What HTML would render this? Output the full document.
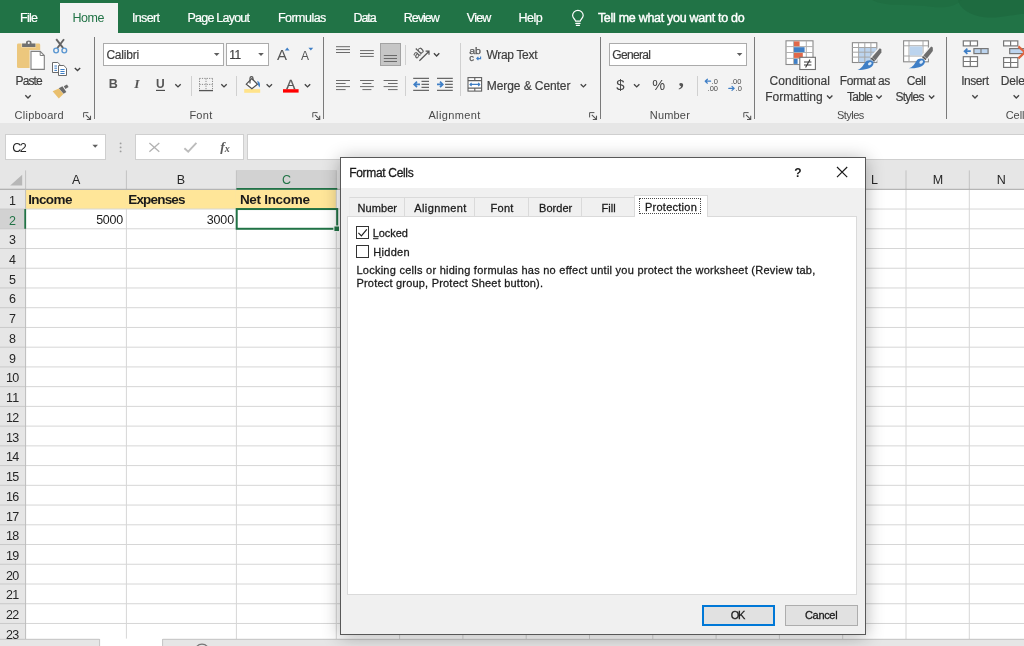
<!DOCTYPE html>
<html><head><meta charset="utf-8"><title>Excel - Format Cells</title>
<style>
html,body{margin:0;padding:0;}
body{width:1024px;height:646px;overflow:hidden;position:relative;background:#fff;font-family:"Liberation Sans",sans-serif;}
.a{position:absolute;}
.t{position:absolute;white-space:pre;line-height:20px;font-family:"Liberation Sans",sans-serif;}
#tabbar{left:0;top:0;width:1024px;height:33px;background:#217346;}
#hometab{left:60px;top:3px;width:57.5px;height:31px;background:#f3f3f3;}
#ribbon{left:0;top:33px;width:1024px;height:90.4px;background:#f3f3f3;}
#fbar{left:0;top:123.4px;width:1024px;height:46.4px;background:#e6e6e6;}
.box{background:#fff;border:1px solid #cfcfcf;box-sizing:border-box;}
.vsep{width:1px;background:#7a7a7a;top:37px;height:82px;}
.ssep{width:1px;background:#d0d0d0;}
.inp{background:#fff;border:1px solid #ababab;box-sizing:border-box;top:43.3px;height:22.6px;}
svg{position:absolute;overflow:visible;}
#dlg{left:340px;top:157px;width:526px;height:478px;background:#f0f0f0;box-sizing:border-box;border:1px solid #585858;box-shadow:0 2px 17px 0 rgba(0,0,0,.30);}
#dtitle{left:341px;top:158px;width:524px;height:30px;background:#fff;}
#pane{left:347px;top:215.7px;width:510px;height:379.6px;background:#fff;border:1px solid #dadada;box-sizing:border-box;}
.dtab{top:197.1px;height:19px;border:1px solid #dadada;border-bottom:none;box-sizing:border-box;background:#f0f0f0;}
#atab{left:634.3px;top:195.2px;width:73.4px;height:21.5px;background:#fff;border:1px solid #dadada;border-bottom:none;box-sizing:border-box;}
#focus{left:638.8px;top:198.4px;width:62px;height:16px;border:1px dotted #4a4a4a;box-sizing:border-box;}
.cb{width:13px;height:13px;border:1px solid #333;background:#fff;box-sizing:border-box;}
.btn{top:604.6px;height:21.6px;background:#e1e1e1;box-sizing:border-box;}
#txt{position:absolute;left:0;top:0;width:1024px;height:646px;will-change:transform;}
svg{will-change:transform;}
.dt{-webkit-text-stroke:.28px #1a1a1a;}
.rt{-webkit-text-stroke:.18px #3d3d3d;}
.wt{-webkit-text-stroke:.2px #fff;}
.wb{-webkit-text-stroke:.4px #fff;}

</style></head>
<body>
<svg class="a" style="left:0;top:0" width="1024" height="646" viewBox="0 0 1024 646">
<rect x="0" y="169.8" width="1024" height="476.2" fill="#fff"/>
<rect x="25.6" y="189.60000000000002" width="310.7" height="19.435" fill="#ffe699"/>
<path d="M25.6 189.30 H1024" stroke="#d6d6d6" stroke-width="1"/>
<path d="M25.6 209.04 H1024" stroke="#d6d6d6" stroke-width="1"/>
<path d="M25.6 228.77 H1024" stroke="#d6d6d6" stroke-width="1"/>
<path d="M25.6 248.50 H1024" stroke="#d6d6d6" stroke-width="1"/>
<path d="M25.6 268.24 H1024" stroke="#d6d6d6" stroke-width="1"/>
<path d="M25.6 287.98 H1024" stroke="#d6d6d6" stroke-width="1"/>
<path d="M25.6 307.71 H1024" stroke="#d6d6d6" stroke-width="1"/>
<path d="M25.6 327.44 H1024" stroke="#d6d6d6" stroke-width="1"/>
<path d="M25.6 347.18 H1024" stroke="#d6d6d6" stroke-width="1"/>
<path d="M25.6 366.92 H1024" stroke="#d6d6d6" stroke-width="1"/>
<path d="M25.6 386.65 H1024" stroke="#d6d6d6" stroke-width="1"/>
<path d="M25.6 406.38 H1024" stroke="#d6d6d6" stroke-width="1"/>
<path d="M25.6 426.12 H1024" stroke="#d6d6d6" stroke-width="1"/>
<path d="M25.6 445.86 H1024" stroke="#d6d6d6" stroke-width="1"/>
<path d="M25.6 465.59 H1024" stroke="#d6d6d6" stroke-width="1"/>
<path d="M25.6 485.32 H1024" stroke="#d6d6d6" stroke-width="1"/>
<path d="M25.6 505.06 H1024" stroke="#d6d6d6" stroke-width="1"/>
<path d="M25.6 524.80 H1024" stroke="#d6d6d6" stroke-width="1"/>
<path d="M25.6 544.53 H1024" stroke="#d6d6d6" stroke-width="1"/>
<path d="M25.6 564.26 H1024" stroke="#d6d6d6" stroke-width="1"/>
<path d="M25.6 584.00 H1024" stroke="#d6d6d6" stroke-width="1"/>
<path d="M25.6 603.74 H1024" stroke="#d6d6d6" stroke-width="1"/>
<path d="M25.6 623.47 H1024" stroke="#d6d6d6" stroke-width="1"/>
<path d="M25.6 643.20 H1024" stroke="#d6d6d6" stroke-width="1"/>
<path d="M126.4 189.3 V640" stroke="#d6d6d6" stroke-width="1"/>
<path d="M236.4 189.3 V640" stroke="#d6d6d6" stroke-width="1"/>
<path d="M336.3 189.3 V640" stroke="#d6d6d6" stroke-width="1"/>
<path d="M399.6 189.3 V640" stroke="#d6d6d6" stroke-width="1"/>
<path d="M462.9 189.3 V640" stroke="#d6d6d6" stroke-width="1"/>
<path d="M526.2 189.3 V640" stroke="#d6d6d6" stroke-width="1"/>
<path d="M589.5 189.3 V640" stroke="#d6d6d6" stroke-width="1"/>
<path d="M652.8 189.3 V640" stroke="#d6d6d6" stroke-width="1"/>
<path d="M716.1 189.3 V640" stroke="#d6d6d6" stroke-width="1"/>
<path d="M779.4 189.3 V640" stroke="#d6d6d6" stroke-width="1"/>
<path d="M842.7 189.3 V640" stroke="#d6d6d6" stroke-width="1"/>
<path d="M906.0 189.3 V640" stroke="#d6d6d6" stroke-width="1"/>
<path d="M969.3 189.3 V640" stroke="#d6d6d6" stroke-width="1"/>
<path d="M1032.6 189.3 V640" stroke="#d6d6d6" stroke-width="1"/>
<path d="M1095.9 189.3 V640" stroke="#d6d6d6" stroke-width="1"/>
<path d="M1159.2 189.3 V640" stroke="#d6d6d6" stroke-width="1"/>
<path d="M126.4 190.10000000000002 V208.43500000000003" stroke="#ffe699" stroke-width="1.8"/>
<path d="M236.4 190.10000000000002 V208.43500000000003" stroke="#ffe699" stroke-width="1.8"/>
<rect x="0" y="169.8" width="1024" height="19.5" fill="#e6e6e6"/>
<rect x="0" y="189.3" width="25.6" height="456.7" fill="#e6e6e6"/>
<rect x="236.4" y="169.8" width="99.9" height="18.5" fill="#d2d2d2"/>
<rect x="0" y="209.04" width="24.6" height="19.735" fill="#d2d2d2"/>
<path d="M25.6 170.4 V189.3" stroke="#c2c2c2" stroke-width="1"/>
<path d="M126.4 170.4 V189.3" stroke="#c2c2c2" stroke-width="1"/>
<path d="M236.4 170.4 V189.3" stroke="#c2c2c2" stroke-width="1"/>
<path d="M336.3 170.4 V189.3" stroke="#c2c2c2" stroke-width="1"/>
<path d="M399.6 170.4 V189.3" stroke="#c2c2c2" stroke-width="1"/>
<path d="M462.9 170.4 V189.3" stroke="#c2c2c2" stroke-width="1"/>
<path d="M526.2 170.4 V189.3" stroke="#c2c2c2" stroke-width="1"/>
<path d="M589.5 170.4 V189.3" stroke="#c2c2c2" stroke-width="1"/>
<path d="M652.8 170.4 V189.3" stroke="#c2c2c2" stroke-width="1"/>
<path d="M716.1 170.4 V189.3" stroke="#c2c2c2" stroke-width="1"/>
<path d="M779.4 170.4 V189.3" stroke="#c2c2c2" stroke-width="1"/>
<path d="M842.7 170.4 V189.3" stroke="#c2c2c2" stroke-width="1"/>
<path d="M906.0 170.4 V189.3" stroke="#c2c2c2" stroke-width="1"/>
<path d="M969.3 170.4 V189.3" stroke="#c2c2c2" stroke-width="1"/>
<path d="M1032.6 170.4 V189.3" stroke="#c2c2c2" stroke-width="1"/>
<path d="M1095.9 170.4 V189.3" stroke="#c2c2c2" stroke-width="1"/>
<path d="M1159.2 170.4 V189.3" stroke="#c2c2c2" stroke-width="1"/>
<path d="M0 189.30 H25.6" stroke="#c9c9c9" stroke-width="1"/>
<path d="M0 209.04 H25.6" stroke="#c9c9c9" stroke-width="1"/>
<path d="M0 228.77 H25.6" stroke="#c9c9c9" stroke-width="1"/>
<path d="M0 248.50 H25.6" stroke="#c9c9c9" stroke-width="1"/>
<path d="M0 268.24 H25.6" stroke="#c9c9c9" stroke-width="1"/>
<path d="M0 287.98 H25.6" stroke="#c9c9c9" stroke-width="1"/>
<path d="M0 307.71 H25.6" stroke="#c9c9c9" stroke-width="1"/>
<path d="M0 327.44 H25.6" stroke="#c9c9c9" stroke-width="1"/>
<path d="M0 347.18 H25.6" stroke="#c9c9c9" stroke-width="1"/>
<path d="M0 366.92 H25.6" stroke="#c9c9c9" stroke-width="1"/>
<path d="M0 386.65 H25.6" stroke="#c9c9c9" stroke-width="1"/>
<path d="M0 406.38 H25.6" stroke="#c9c9c9" stroke-width="1"/>
<path d="M0 426.12 H25.6" stroke="#c9c9c9" stroke-width="1"/>
<path d="M0 445.86 H25.6" stroke="#c9c9c9" stroke-width="1"/>
<path d="M0 465.59 H25.6" stroke="#c9c9c9" stroke-width="1"/>
<path d="M0 485.32 H25.6" stroke="#c9c9c9" stroke-width="1"/>
<path d="M0 505.06 H25.6" stroke="#c9c9c9" stroke-width="1"/>
<path d="M0 524.80 H25.6" stroke="#c9c9c9" stroke-width="1"/>
<path d="M0 544.53 H25.6" stroke="#c9c9c9" stroke-width="1"/>
<path d="M0 564.26 H25.6" stroke="#c9c9c9" stroke-width="1"/>
<path d="M0 584.00 H25.6" stroke="#c9c9c9" stroke-width="1"/>
<path d="M0 603.74 H25.6" stroke="#c9c9c9" stroke-width="1"/>
<path d="M0 623.47 H25.6" stroke="#c9c9c9" stroke-width="1"/>
<path d="M0 643.20 H25.6" stroke="#c9c9c9" stroke-width="1"/>
<path d="M0 189.3 H1024" stroke="#ababab" stroke-width="1"/>
<path d="M25.6 189.3 V640" stroke="#bcbcbc" stroke-width="1"/>
<path d="M236.4 188.9 H337.3" stroke="#217346" stroke-width="1.8"/>
<path d="M25.200000000000003 209.04 V228.77" stroke="#217346" stroke-width="1.8"/>
<rect x="236.70000000000002" y="209.04" width="100.5" height="19.735" fill="none" stroke="#217346" stroke-width="2"/>
<rect x="333.90000000000003" y="225.97" width="5.6" height="5.6" fill="#217346" stroke="#fff" stroke-width="1"/>
<rect x="0" y="639" width="1024" height="7" fill="#e6e6e6"/>
<path d="M0 639.3 H99.6 M162.6 639.3 H1024" stroke="#c4c4c4" stroke-width="1"/>
<rect x="99.6" y="638.6" width="63" height="8" fill="#fff"/>
<path d="M99.6 639 V646 M162.6 639 V646" stroke="#c4c4c4" stroke-width="1"/>
<circle cx="202" cy="651.6" r="7.4" fill="none" stroke="#777" stroke-width="1.2"/>
</svg>
<div class="a" id="tabbar"></div>
<svg class="a" style="left:0;top:0" width="1024" height="33" viewBox="0 0 1024 33">
  <path d="M872 0 C 885 7, 905 4, 925 6 C 940 8, 952 9, 962 0 Z" fill="#1e6a40" opacity=".6"/>
  <path d="M958 0 C 960 10, 975 20, 1000 17 C 1010 16, 1018 14, 1024 14 L1024 0 Z" fill="#1e683f" opacity=".75"/>
</svg>
<div class="a" id="hometab"></div>
<div class="a" id="ribbon"></div>
<div class="a" id="fbar"></div>

<!-- ribbon group separators -->
<div class="a vsep" style="left:94.3px"></div>
<div class="a vsep" style="left:323.2px"></div>
<div class="a vsep" style="left:599.8px"></div>
<div class="a vsep" style="left:754.2px"></div>
<div class="a vsep" style="left:946.2px"></div>
<!-- small separators -->
<div class="a ssep" style="left:191px;top:76px;height:19.5px"></div>
<div class="a ssep" style="left:236.4px;top:76px;height:19.5px"></div>
<div class="a ssep" style="left:405px;top:44.6px;height:20.5px"></div>
<div class="a ssep" style="left:405px;top:76px;height:19.5px"></div>
<div class="a ssep" style="left:459.8px;top:42.7px;height:53.7px"></div>
<div class="a ssep" style="left:697px;top:76px;height:19.5px"></div>

<!-- input boxes -->
<div class="a inp" style="left:103px;width:121px"></div>
<div class="a inp" style="left:226.3px;width:42.7px"></div>
<div class="a inp" style="left:608.8px;width:138.2px"></div>
<!-- selected bottom-align button -->
<div class="a" style="left:379.6px;top:43.3px;width:21.5px;height:22.8px;background:#c6c6c6;border:1px solid #a3a3a3;box-sizing:border-box"></div>


<!-- formula bar boxes -->
<div class="a box" style="left:5px;top:134px;width:101px;height:26px"></div>
<div class="a box" style="left:135px;top:134px;width:109px;height:26px"></div>
<div class="a box" style="left:247px;top:134px;width:790px;height:26px"></div>

<svg class="a" style="left:0;top:0" width="1024" height="646" viewBox="0 0 1024 646" font-family="Liberation Sans, sans-serif">
<defs>
  <path id="chev" d="M-2.7 -1.3 L0 1.4 L2.7 -1.3" fill="none" stroke="#444" stroke-width="1.35" stroke-linecap="butt" stroke-linejoin="miter"/>
  <path id="tri" d="M-2.8 -1.4 L2.8 -1.4 L0 1.6 Z" fill="#5e5e5e"/>
  <g id="launch"><path d="M0.4 5.2 V0.4 H5.2" fill="none" stroke="#555" stroke-width="1"/><path d="M2.6 2.6 L7 7 M7.3 3.6 V7.3 H3.6" fill="none" stroke="#555" stroke-width="1.1"/></g>
</defs>

<!-- bulb -->
<g fill="none" stroke="#fff" stroke-width="1.2" stroke-linecap="round">
  <path d="M575.6 21.2 C575.4 19.4 572.6 18.2 572.6 15.6 a5.3 5.3 0 0 1 10.6 0 C583.2 18.2 580.4 19.4 580.2 21.2 Z"/>
  <path d="M575.8 23.4 H580 M576.4 25.4 H579.4"/>
</g>

<!-- Paste -->
<rect x="17" y="43.4" width="23.2" height="24.7" rx="1.4" fill="#ecc77d"/>
<path d="M21.4 47.6 V42.8 H25.6 V42.6 a3.1 2.6 0 0 1 6.2 0 V42.8 H36 V47.6 Z" fill="#f3f3f3" opacity=".55"/>
<path d="M22.1 46.9 V43.5 H26 V42.8 a2.75 2.3 0 0 1 5.5 0 V43.5 H35.4 V46.9 Z" fill="#707070"/>
<circle cx="28.75" cy="42.9" r="1.05" fill="#f0f0f0"/>
<rect x="29.6" y="50" width="15.8" height="20.6" fill="#f3f3f3"/>
<path d="M31 51.4 H40.2 L44.3 55.5 V69.4 H31 Z" fill="#fff" stroke="#808080" stroke-width="1.1"/>
<path d="M40.2 51.4 V55.5 H44.3" fill="none" stroke="#808080" stroke-width="1"/>
<use href="#chev" x="28" y="96.6"/>

<!-- scissors -->
<g fill="none">
  <path d="M56.2 39.2 L63.2 48.2 M64 39.2 L57.2 48.2" stroke="#636363" stroke-width="1.9"/>
  <circle cx="56.1" cy="50.5" r="2.35" stroke="#5b97d1" stroke-width="1.4"/>
  <circle cx="64.3" cy="50.5" r="2.35" stroke="#5b97d1" stroke-width="1.4"/>
</g>
<!-- copy -->
<g stroke="#6a6a6a" stroke-width="1" fill="#fff">
  <path d="M52.5 62.5 H57.8 L60.5 65.2 V72.5 H52.5 Z"/>
  <path d="M58.5 65.5 H63.8 L66.5 68.2 V75.5 H58.5 Z"/>
</g>
<path d="M54.4 66 H57 M54.4 68.2 H57 M54.4 70.4 H57" stroke="#3f7fc6" stroke-width="1"/>
<path d="M60.4 69.5 H64.6 M60.4 71.5 H64.6 M60.4 73.5 H64.6" stroke="#3f7fc6" stroke-width="1"/>
<use href="#chev" x="77.5" y="69.2"/>
<!-- format painter -->
<path d="M52.6 91.2 L58.8 88.6 L63.4 94 L58.8 98.5 Z" fill="#e9bf6d"/>
<path d="M58.8 88.2 L62.4 86.3 L66.4 91.9 L63.6 93.8 Z" fill="#6a6a6a"/>
<path d="M63.8 86.2 L67 84.4 L68.6 87 L65.4 88.9 Z" fill="#6a6a6a"/>
<use href="#launch" x="83.2" y="112.2"/>

<!-- font dropdown arrows -->
<use href="#tri" x="216.7" y="54.4"/>
<use href="#tri" x="261" y="54.4"/>
<use href="#tri" x="739.6" y="54.4"/>
<!-- A^ Av -->
<text x="276.9" y="59.8" font-size="15" fill="#555">A</text>
<path d="M284.8 50.4 L287.2 47.6 L289.6 50.4 Z" fill="#3f7fc6"/>
<text x="301" y="59.8" font-size="12" fill="#555">A</text>
<path d="M308.4 47.8 L313.2 47.8 L310.8 50.6 Z" fill="#3f7fc6"/>
<!-- U underline + chevron -->
<path d="M156 90.4 H165" stroke="#444" stroke-width="1.1"/>
<use href="#chev" x="178" y="85.5"/>
<!-- borders -->
<g stroke="#8a8a8a" stroke-width="1" stroke-dasharray="1.2 1.2" fill="none">
  <path d="M199.5 78.4 H212.5 M199.5 84.4 H212.5 M199.5 78.4 V90 M206 78.4 V90 M212.5 78.4 V90"/>
</g>
<path d="M199 90.6 H213" stroke="#555" stroke-width="1.3"/>
<use href="#chev" x="224" y="85.5"/>
<!-- fill bucket -->
<rect x="244.2" y="89.1" width="16" height="3.7" fill="#ffe38a"/>
<g fill="none" stroke="#505050" stroke-width="1.2" stroke-linejoin="miter">
  <path d="M246.3 84.1 L251.8 78.6 L257.5 84.3 L251.9 88.7 Z" fill="#fff"/>
  <path d="M250 83.6 V78.2 a1.5 1.5 0 0 1 3 0 V80.2"/>
</g>
<path d="M257.2 80.8 C259.6 81.6 260.8 84.2 259.6 87.4 C258.6 86 257.8 84.8 257.8 83.4 Z" fill="#3f7fc6"/>
<use href="#chev" x="269.3" y="85.5"/>
<!-- font color -->
<text x="286.3" y="88.5" font-size="13.5" fill="#555" stroke="#555" stroke-width=".3">A</text>
<rect x="283" y="89.2" width="15.6" height="3.4" fill="#ff0000"/>
<use href="#chev" x="307.5" y="85.5"/>
<use href="#launch" x="312.4" y="112.2"/>

<!-- alignment row 1 -->
<g stroke="#6a6a6a" stroke-width="1" fill="none">
  <path d="M336 46.7 H350 M336 49.6 H350 M336 52.5 H350"/>
  <path d="M360 50.6 H373.8 M360 53.5 H373.8 M360 56.4 H373.8"/>
  <path d="M383.8 55.5 H397 M383.8 58.5 H397 M383.8 61.5 H397"/>
  <!-- row2 -->
  <path d="M336 80.5 H350 M336 83.5 H345.6 M336 86.6 H350 M336 89.6 H345.6"/>
  <path d="M360 80.5 H373.8 M362.4 83.5 H371.4 M360 86.6 H373.8 M362.4 89.6 H371.4"/>
  <path d="M383.6 80.5 H397.6 M388 83.5 H397.6 M383.6 86.6 H397.6 M388 89.6 H397.6"/>
</g>
<!-- orientation -->
<text x="0" y="0" font-size="10.5" fill="#555" stroke="#555" stroke-width=".2" transform="translate(416.4,59) rotate(-45)">ab</text>
<path d="M419.4 60.8 L428.6 51.8 M425.6 51.2 H429 V54.8" fill="none" stroke="#555" stroke-width="1.2"/>
<use href="#chev" x="436.6" y="54.6"/>
<!-- indent icons -->
<g stroke="#686868" stroke-width="1.15" fill="none">
  <path d="M413.2 78.3 H429 M421.5 81.3 H429 M421.5 84.4 H429 M421.5 87.4 H429 M413.2 90.4 H429"/>
  <path d="M437 78.3 H452.8 M445.1 81.3 H452.8 M445.1 84.4 H452.8 M445.1 87.4 H452.8 M437 90.4 H452.8"/>
</g>
<g stroke="#3f7fc6" stroke-width="1.7" fill="none" stroke-linejoin="miter" stroke-linecap="butt">
  <path d="M420 84.4 H414.4 M417 81.6 L414.2 84.4 L417 87.2"/>
  <path d="M437 84.4 H442.6 M440 81.6 L442.8 84.4 L440 87.2"/>
</g>
<!-- wrap text icon -->
<text x="469.2" y="54" font-size="9.5" fill="#555" stroke="#555" stroke-width=".25" textLength="11.8" lengthAdjust="spacingAndGlyphs">ab</text>
<text x="469.3" y="60.7" font-size="9.5" fill="#555" stroke="#555" stroke-width=".25">c</text>
<path d="M480.6 56.4 V58.6 H477 M478.4 57 L476.8 58.6 L478.4 60.2" fill="none" stroke="#3f7fc6" stroke-width="1.1"/>
<!-- merge icon -->
<g fill="#fff" stroke="#606060" stroke-width="1.1">
  <rect x="468" y="77.6" width="13.6" height="13.5"/>
  <path d="M468 80.6 H481.6 M468 88.1 H481.6 M474.8 77.6 V80.6 M474.8 88.1 V91.1" fill="none"/>
</g>
<path d="M470 84.4 H479.8 M471.6 82.8 L470 84.4 L471.6 86 M478.2 82.8 L479.8 84.4 L478.2 86" fill="none" stroke="#3f7fc6" stroke-width="1.1"/>
<use href="#chev" x="583.4" y="85.5"/>
<use href="#launch" x="589.2" y="112.2"/>

<!-- number -->
<use href="#chev" x="636.7" y="85.5"/>
<g font-size="7.5" fill="#4a4a4a">
  <text x="711.6" y="84">.0</text><text x="707.6" y="91">.00</text>
  <text x="731" y="84">.00</text><text x="735.6" y="91">.0</text>
</g>
<g stroke="#3f7fc6" stroke-width="1.2" fill="none" stroke-linejoin="round" stroke-linecap="round">
  <path d="M710.6 81.2 H705.4 M707.4 79.2 L705.2 81.2 L707.4 83.2"/>
  <path d="M728.8 88.4 H734 M732 86.4 L734.2 88.4 L732 90.4"/>
</g>
<use href="#launch" x="743.4" y="112.2"/>

<!-- conditional formatting -->
<g>
  <rect x="786" y="40.8" width="27" height="23.7" fill="#fff" stroke="#8a8a8a" stroke-width="1.1"/>
  <path d="M786 46.6 H813 M786 52.5 H813 M786 58.4 H813 M793.6 40.8 V64.5 M806.3 40.8 V64.5" stroke="#b0b0b0" stroke-width="1" fill="none"/>
  <rect x="794" y="41.4" width="5.6" height="4.8" fill="#e0694a"/>
  <rect x="794" y="47.2" width="10.6" height="4.9" fill="#3f7fc6"/>
  <rect x="794" y="53" width="8.8" height="4.9" fill="#e0694a"/>
  <rect x="794" y="58.9" width="3.6" height="5" fill="#3f7fc6"/>
  <rect x="799.8" y="57.3" width="15.6" height="12.2" fill="#fff" stroke="#707070" stroke-width="1.1"/>
  <path d="M804 62 H811.4 M804 65 H811.4 M810 59.6 L805.6 67.6" stroke="#3a3a3a" stroke-width="1.1" fill="none"/>
</g>
<use href="#chev" x="829.7" y="96.9"/>
<!-- format as table -->
<g>
  <rect x="852.4" y="42.7" width="24.4" height="19.8" fill="#fff" stroke="#8a8a8a" stroke-width="1.1"/>
  <rect x="858.8" y="47.6" width="17.6" height="14.4" fill="#bcd4ee"/>
  <path d="M852.4 47.5 H876.8 M852.4 52.2 H876.8 M852.4 57.1 H876.8 M858.6 42.7 V62.5 M864.8 42.7 V62.5 M870.9 42.7 V62.5" stroke="#a6a6a6" stroke-width="1" fill="none"/>
  <path d="M871.2 57 L879.6 47.6 L881.6 48.6 L881.6 52.8 L875.6 61 Z" fill="#f3f3f3" stroke="#f3f3f3" stroke-width="1.6"/>
  <path d="M872 57.2 L879.8 48.2 L881.4 49.2 L881.4 52.6 L875.4 60.4 Z" fill="#6e6e6e"/>
  <path d="M870.6 58.6 L871.8 57.6 L875 60.6 L874 61.8 Z" fill="#555"/>
  <path d="M857.4 69.8 C861.4 69 863 65.6 865 62.6 C867 59.4 872.6 59.4 873.6 62.8 C873.8 67.6 866 70.6 857.4 69.8 Z" fill="#3f7fc6"/>
  <ellipse cx="869.8" cy="63.6" rx="2" ry="1.4" transform="rotate(-35 869.8 63.6)" fill="#dbe9f8"/>
</g>
<use href="#chev" x="879" y="96.9"/>
<!-- cell styles -->
<g>
  <rect x="903.6" y="40.8" width="24.8" height="21" fill="#fff" stroke="#8a8a8a" stroke-width="1.1"/>
  <path d="M903.6 45.8 H928.4 M903.6 56 H928.4 M909 40.8 V61.8 M923 40.8 V61.8" stroke="#a6a6a6" stroke-width="1" fill="none"/>
  <rect x="909.6" y="46.4" width="12.8" height="9" fill="#bcd4ee"/>
  <path d="M922.6 55.4 L931 46 L933 47 L933 51.2 L927 59.4 Z" fill="#f3f3f3" stroke="#f3f3f3" stroke-width="1.6"/>
  <path d="M923.4 55.6 L931.2 46.6 L932.8 47.6 L932.8 51 L926.8 58.8 Z" fill="#6e6e6e"/>
  <path d="M922 57 L923.2 56 L926.4 59 L925.4 60.2 Z" fill="#555"/>
  <path d="M908.8 68.2 C912.8 67.4 914.4 64 916.4 61 C918.4 57.8 924 57.8 925 61.2 C925.2 66 917.4 69 908.8 68.2 Z" fill="#3f7fc6"/>
  <ellipse cx="921.2" cy="62" rx="2" ry="1.4" transform="rotate(-35 921.2 62)" fill="#dbe9f8"/>
</g>
<use href="#chev" x="931.6" y="96.9"/>
<!-- insert cells icon -->
<g fill="#fff" stroke="#777" stroke-width="1.2">
  <rect x="963.3" y="40.9" width="14.2" height="5"/><path d="M970.3 40.9 V45.9" fill="none"/>
  <rect x="973.9" y="48.6" width="14.2" height="5" fill="#bcd4ee"/><path d="M981 48.6 V53.6" fill="none"/>
  <rect x="963.3" y="56.7" width="14.2" height="9.8"/><path d="M970.3 56.7 V66.5 M963.3 61.5 H977.5" fill="none"/>
</g>
<path d="M970.8 51.2 H965 M967.4 48.6 L964.6 51.2 L967.4 53.8" stroke="#3f7fc6" stroke-width="1.7" fill="none" stroke-linejoin="miter" stroke-linecap="butt"/>
<use href="#chev" x="975" y="96.6"/>
<!-- delete cells icon -->
<g fill="#fff" stroke="#777" stroke-width="1.2">
  <rect x="1003.6" y="40.9" width="14.2" height="5"/><path d="M1010.6 40.9 V45.9" fill="none"/>
  <rect x="1009.7" y="48.6" width="16" height="5" fill="#bcd4ee"/>
  <rect x="1003.6" y="57.6" width="14.2" height="9.8"/><path d="M1010.6 57.6 V67.4 M1003.6 62.5 H1017.8" fill="none"/>
</g>
<path d="M1018.4 46.4 L1024.8 52.2 L1018.4 58.4" stroke="#dd6440" stroke-width="2.2" fill="none"/>
<use href="#chev" x="1016.3" y="96.6"/>

<!-- formula bar bits -->
<use href="#tri" x="95.2" y="146.2"/>
<g fill="#9e9e9e"><circle cx="120.6" cy="143.4" r=".95"/><circle cx="120.6" cy="147.4" r=".95"/><circle cx="120.6" cy="151.4" r=".95"/></g>
<path d="M149.4 142.9 L159.3 151.7 M159.3 142.9 L149.4 151.7" stroke="#b2b2b2" stroke-width="1.3" fill="none"/>
<path d="M184.4 148.2 L188.2 151.6 L196.4 142.8" stroke="#bcbcbc" stroke-width="1.9" fill="none"/>
<text x="220.2" y="151.4" font-size="13.5" font-style="italic" font-weight="bold" font-family="Liberation Serif, serif" fill="#5a5a5a">f</text>
<text x="224.8" y="152.2" font-size="10" font-style="italic" font-weight="bold" font-family="Liberation Serif, serif" fill="#5a5a5a">x</text>
<!-- select all -->
<path d="M22.2 174.8 V185.4 H10.2 Z" fill="#b7b7b7"/>
</svg>


<!-- dialog -->
<div class="a" id="dlg"></div>
<div class="a" id="dtitle"></div>
<div class="a dtab" style="left:348.8px;width:56.2px;border-left-color:#ececec"></div>
<div class="a dtab" style="left:404px;width:70.9px"></div>
<div class="a dtab" style="left:473.9px;width:54.9px"></div>
<div class="a dtab" style="left:527.8px;width:54.2px"></div>
<div class="a dtab" style="left:581px;width:54px"></div>
<div class="a" id="pane"></div>
<div class="a" id="atab"></div>
<div class="a" id="focus"></div>
<div class="a cb" style="left:356px;top:226.4px"></div>
<div class="a cb" style="left:356px;top:245.2px"></div>
<div class="a btn" style="left:701.9px;width:73.4px;border:2px solid #0078d7"></div>
<div class="a btn" style="left:784.9px;width:73px;border:1px solid #adadad"></div>
<svg class="a" style="left:0;top:0" width="1024" height="646" viewBox="0 0 1024 646">
  <path d="M358.4 232.8 L361.4 235.8 L366.8 229.4" fill="none" stroke="#222" stroke-width="1.2"/>
  <path d="M837 167 L847.2 177.2 M847.2 167 L837 177.2" stroke="#1a1a1a" stroke-width="1.15" fill="none"/>
  <path d="M373 238.7 H378.4 M379.6 257.4 H381.6" stroke="#1a1a1a" stroke-width="1"/>
</svg>

<!-- text layer -->
<div id="txt">
<span class="t wt" style="left:20.00px;top:7.97px;font-size:12.5px;color:#ffffff;letter-spacing:-0.719px;">File</span>
<span class="t wt" style="left:132.00px;top:7.97px;font-size:12.5px;color:#ffffff;letter-spacing:-0.653px;">Insert</span>
<span class="t wt" style="left:187.50px;top:7.97px;font-size:12.5px;color:#ffffff;letter-spacing:-0.770px;">Page Layout</span>
<span class="t wt" style="left:278.00px;top:7.97px;font-size:12.5px;color:#ffffff;letter-spacing:-0.542px;">Formulas</span>
<span class="t wt" style="left:353.50px;top:7.97px;font-size:12.5px;color:#ffffff;letter-spacing:-1.102px;">Data</span>
<span class="t wt" style="left:403.80px;top:7.97px;font-size:12.5px;color:#ffffff;letter-spacing:-1.000px;">Review</span>
<span class="t wt" style="left:466.80px;top:7.97px;font-size:12.5px;color:#ffffff;letter-spacing:-0.758px;">View</span>
<span class="t wt" style="left:518.40px;top:7.97px;font-size:12.5px;color:#ffffff;letter-spacing:-0.440px;">Help</span>
<span class="t wb" style="left:597.90px;top:7.97px;font-size:12.5px;color:#ffffff;letter-spacing:-0.287px;">Tell me what you want to do</span>
<span class="t" style="left:72.50px;top:7.97px;font-size:12.5px;color:#217346;letter-spacing:-0.448px;">Home</span>
<span class="t rt" style="left:15.60px;top:70.74px;font-size:12px;color:#3d3d3d;letter-spacing:-0.922px;">Paste</span>
<span class="t" style="left:14.60px;top:105.09px;font-size:11px;color:#4a4a4a;letter-spacing:0.238px;">Clipboard</span>
<span class="t rt" style="left:106.40px;top:44.84px;font-size:12px;color:#3d3d3d;letter-spacing:-0.186px;">Calibri</span>
<span class="t rt" style="left:229.20px;top:44.84px;font-size:12px;color:#3d3d3d;letter-spacing:-0.469px;">11</span>
<span class="t" style="left:108.83px;top:74.37px;font-size:12.5px;color:#555;font-weight:bold;">B</span>
<span class="t" style="left:134.27px;top:74.02px;font-size:13.5px;color:#555;font-weight:bold;font-style:italic;font-family:'Liberation Serif',serif;">I</span>
<span class="t" style="left:156.11px;top:74.24px;font-size:12px;color:#555;font-weight:bold;">U</span>
<span class="t" style="left:189.40px;top:105.09px;font-size:11px;color:#4a4a4a;letter-spacing:0.261px;">Font</span>
<span class="t rt" style="left:486.40px;top:45.14px;font-size:12px;color:#3d3d3d;letter-spacing:-0.310px;">Wrap Text</span>
<span class="t rt" style="left:486.80px;top:75.54px;font-size:12px;color:#3d3d3d;letter-spacing:-0.085px;">Merge &amp; Center</span>
<span class="t" style="left:428.40px;top:105.09px;font-size:11px;color:#4a4a4a;letter-spacing:0.360px;">Alignment</span>
<span class="t rt" style="left:612.30px;top:44.84px;font-size:12px;color:#3d3d3d;letter-spacing:-0.667px;">General</span>
<span class="t" style="left:616.33px;top:74.80px;font-size:15px;color:#444;">$</span>
<span class="t" style="left:652.20px;top:75.28px;font-size:14.5px;color:#444;">%</span>
<span class="t" style="left:678.50px;top:68.98px;font-size:22px;color:#555;font-weight:bold;font-family:'Liberation Serif',serif;">,</span>
<span class="t" style="left:649.80px;top:105.09px;font-size:11px;color:#4a4a4a;letter-spacing:0.175px;">Number</span>
<span class="t rt" style="left:769.50px;top:70.84px;font-size:12px;color:#3d3d3d;letter-spacing:0.045px;">Conditional</span>
<span class="t rt" style="left:765.20px;top:86.64px;font-size:12px;color:#3d3d3d;letter-spacing:0.016px;">Formatting</span>
<span class="t rt" style="left:839.80px;top:70.84px;font-size:12px;color:#3d3d3d;letter-spacing:-0.452px;">Format as</span>
<span class="t rt" style="left:847.00px;top:86.64px;font-size:12px;color:#3d3d3d;letter-spacing:-0.672px;">Table</span>
<span class="t rt" style="left:906.80px;top:70.84px;font-size:12px;color:#3d3d3d;letter-spacing:-0.557px;">Cell</span>
<span class="t rt" style="left:895.50px;top:86.64px;font-size:12px;color:#3d3d3d;letter-spacing:-0.758px;">Styles</span>
<span class="t" style="left:837.00px;top:105.09px;font-size:11px;color:#4a4a4a;letter-spacing:-0.534px;">Styles</span>
<span class="t rt" style="left:961.20px;top:70.84px;font-size:12px;color:#3d3d3d;letter-spacing:-0.443px;">Insert</span>
<span class="t rt" style="left:1000.70px;top:70.84px;font-size:12px;color:#3d3d3d;letter-spacing:-0.178px;">Delete</span>
<span class="t" style="left:1005.70px;top:105.09px;font-size:11px;color:#4a4a4a;letter-spacing:-0.038px;">Cells</span>
<span class="t" style="left:12.20px;top:137.87px;font-size:12.5px;color:#262626;letter-spacing:-1.484px;">C2</span>
<span class="t" style="left:72.03px;top:169.87px;font-size:12.5px;color:#262626;">A</span>
<span class="t" style="left:176.63px;top:169.87px;font-size:12.5px;color:#262626;">B</span>
<span class="t" style="left:281.98px;top:169.87px;font-size:12.5px;color:#217346;">C</span>
<span class="t" style="left:871.07px;top:169.87px;font-size:12.5px;color:#262626;">L</span>
<span class="t" style="left:932.79px;top:169.87px;font-size:12.5px;color:#262626;">M</span>
<span class="t" style="left:996.78px;top:169.87px;font-size:12.5px;color:#262626;">N</span>
<span class="t" style="left:9.12px;top:190.77px;font-size:12.5px;color:#262626;">1</span>
<span class="t" style="left:9.12px;top:210.50px;font-size:12.5px;color:#217346;">2</span>
<span class="t" style="left:9.12px;top:230.24px;font-size:12.5px;color:#262626;">3</span>
<span class="t" style="left:9.12px;top:249.97px;font-size:12.5px;color:#262626;">4</span>
<span class="t" style="left:9.12px;top:269.71px;font-size:12.5px;color:#262626;">5</span>
<span class="t" style="left:9.12px;top:289.44px;font-size:12.5px;color:#262626;">6</span>
<span class="t" style="left:9.12px;top:309.18px;font-size:12.5px;color:#262626;">7</span>
<span class="t" style="left:9.12px;top:328.91px;font-size:12.5px;color:#262626;">8</span>
<span class="t" style="left:9.12px;top:348.65px;font-size:12.5px;color:#262626;">9</span>
<span class="t" style="left:6.00px;top:368.38px;font-size:12.5px;color:#262626;letter-spacing:-0.706px;">10</span>
<span class="t" style="left:6.00px;top:388.12px;font-size:12.5px;color:#262626;letter-spacing:0.216px;">11</span>
<span class="t" style="left:6.00px;top:407.85px;font-size:12.5px;color:#262626;letter-spacing:-0.706px;">12</span>
<span class="t" style="left:6.00px;top:427.59px;font-size:12.5px;color:#262626;letter-spacing:-0.706px;">13</span>
<span class="t" style="left:6.00px;top:447.32px;font-size:12.5px;color:#262626;letter-spacing:-0.706px;">14</span>
<span class="t" style="left:6.00px;top:467.06px;font-size:12.5px;color:#262626;letter-spacing:-0.706px;">15</span>
<span class="t" style="left:6.00px;top:486.79px;font-size:12.5px;color:#262626;letter-spacing:-0.706px;">16</span>
<span class="t" style="left:6.00px;top:506.53px;font-size:12.5px;color:#262626;letter-spacing:-0.706px;">17</span>
<span class="t" style="left:6.00px;top:526.26px;font-size:12.5px;color:#262626;letter-spacing:-0.706px;">18</span>
<span class="t" style="left:6.00px;top:546.00px;font-size:12.5px;color:#262626;letter-spacing:-0.706px;">19</span>
<span class="t" style="left:6.00px;top:565.73px;font-size:12.5px;color:#262626;letter-spacing:-0.706px;">20</span>
<span class="t" style="left:6.00px;top:585.47px;font-size:12.5px;color:#262626;letter-spacing:-0.706px;">21</span>
<span class="t" style="left:6.00px;top:605.20px;font-size:12.5px;color:#262626;letter-spacing:-0.706px;">22</span>
<span class="t" style="left:6.00px;top:624.94px;font-size:12.5px;color:#262626;letter-spacing:-0.706px;">23</span>
<span class="t" style="left:28.20px;top:189.92px;font-size:13.5px;color:#1a1a1a;font-weight:bold;letter-spacing:-0.613px;">Income</span>
<span class="t" style="left:128.20px;top:189.92px;font-size:13.5px;color:#1a1a1a;font-weight:bold;letter-spacing:-0.807px;">Expenses</span>
<span class="t" style="left:239.90px;top:189.92px;font-size:13.5px;color:#1a1a1a;font-weight:bold;letter-spacing:-0.298px;">Net Income</span>
<span class="t" style="left:96.20px;top:209.77px;font-size:12.5px;color:#1a1a1a;letter-spacing:-0.271px;transform:scaleY(1.09);transform-origin:0 14.33px;">5000</span>
<span class="t" style="left:206.80px;top:209.77px;font-size:12.5px;color:#1a1a1a;letter-spacing:-0.171px;transform:scaleY(1.09);transform-origin:0 14.33px;">3000</span>
<span class="t dt" style="left:349.20px;top:162.64px;font-size:12px;color:#1a1a1a;letter-spacing:-0.320px;">Format Cells</span>
<span class="t" style="left:794.23px;top:162.84px;font-size:12px;color:#1a1a1a;font-weight:bold;">?</span>
<span class="t dt" style="left:357.60px;top:197.59px;font-size:11px;color:#1a1a1a;letter-spacing:0.055px;">Number</span>
<span class="t dt" style="left:414.20px;top:197.59px;font-size:11px;color:#1a1a1a;letter-spacing:0.410px;">Alignment</span>
<span class="t dt" style="left:490.40px;top:197.59px;font-size:11px;color:#1a1a1a;letter-spacing:0.328px;">Font</span>
<span class="t dt" style="left:539.00px;top:197.59px;font-size:11px;color:#1a1a1a;letter-spacing:0.054px;">Border</span>
<span class="t dt" style="left:601.40px;top:197.59px;font-size:11px;color:#1a1a1a;letter-spacing:0.079px;">Fill</span>
<span class="t dt" style="left:645.00px;top:196.59px;font-size:11px;color:#1a1a1a;letter-spacing:0.252px;">Protection</span>
<span class="t dt" style="left:372.80px;top:223.19px;font-size:11px;color:#1a1a1a;letter-spacing:-0.097px;">Locked</span>
<span class="t dt" style="left:373.20px;top:241.89px;font-size:11px;color:#1a1a1a;letter-spacing:0.328px;">Hidden</span>
<span class="t dt" style="left:356.40px;top:260.19px;font-size:11px;color:#1a1a1a;letter-spacing:0.257px;">Locking cells or hiding formulas has no effect until you protect the worksheet (Review tab,</span>
<span class="t dt" style="left:356.40px;top:272.89px;font-size:11px;color:#1a1a1a;letter-spacing:0.206px;">Protect group, Protect Sheet button).</span>
<span class="t dt" style="left:730.80px;top:605.49px;font-size:11px;color:#1a1a1a;letter-spacing:-1.306px;">OK</span>
<span class="t dt" style="left:805.00px;top:605.49px;font-size:11px;color:#1a1a1a;letter-spacing:-0.330px;">Cancel</span>
</div>
</body></html>
